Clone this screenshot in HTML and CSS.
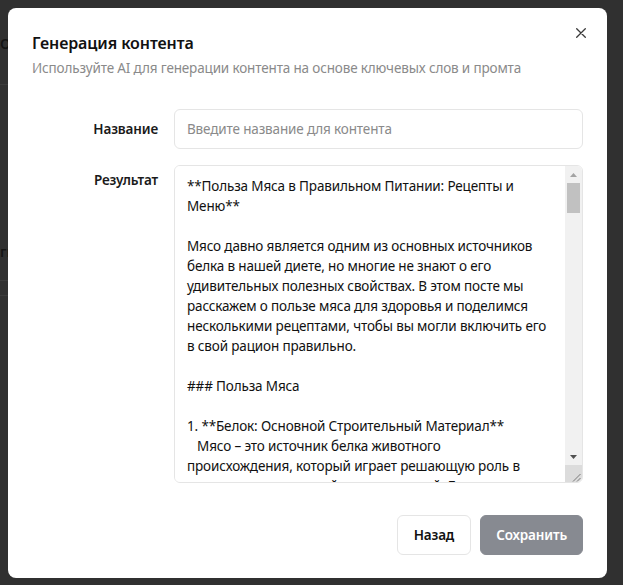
FILE: index.html
```html
<!DOCTYPE html>
<html lang="ru">
<head>
<meta charset="utf-8">
<title>Генерация контента</title>
<link rel="stylesheet" href="styles.css">
</head>
<body>
<div class="page">
  <div class="page-line l1"></div>
  <div class="page-line l2"></div>
  <div class="page-line l3"></div>
  <div class="page-text t1">Ог</div>
  <div class="page-text t2">ги</div>
</div>
<div class="overlay">
  <div class="modal" role="dialog">
    <button class="close" type="button" aria-label="Закрыть">
      <svg width="10" height="10" viewBox="0 0 10 10"><path d="M0.7 0.7L9.3 9.3M9.3 0.7L0.7 9.3" stroke="#3a3a3a" stroke-width="1.3" stroke-linecap="round"/></svg>
    </button>
    <div class="header">
      <h2 class="title">Генерация контента</h2>
      <p class="subtitle">Используйте AI для генерации контента на основе ключевых слов и промта</p>
    </div>
    <form class="form">
      <label class="label label-mid" for="name">Название</label>
      <input id="name" class="input" type="text" placeholder="Введите название для контента">
      <label class="label label-top" for="result">Результат</label>
      <div class="textarea-wrap">
        <textarea id="result" class="textarea">**Польза Мяса в Правильном Питании: Рецепты и Меню**

Мясо давно является одним из основных источников белка в нашей диете, но многие не знают о его удивительных полезных свойствах. В этом посте мы расскажем о пользе мяса для здоровья и поделимся несколькими рецептами, чтобы вы могли включить его в свой рацион правильно.

### Польза Мяса

1. **Белок: Основной Строительный Материал**
   Мясо – это источник белка животного
происхождения, который играет решающую роль в построении мышечной массы и тканей. Белок также необходим для восстановления организма после физических нагрузок.

2. **Железо и Профилактика Анемии**
   Красное мясо богато гемовым железом, которое усваивается организмом значительно лучше, чем железо из растительных продуктов.

3. **Витамины Группы B**
   Мясо содержит витамины B6 и B12, которые поддерживают работу нервной системы и участвуют в образовании красных кровяных телец.

4. **Цинк и Иммунитет**
   Цинк, содержащийся в говядине и баранине, укрепляет иммунную систему и способствует заживлению ран.

5. **Чувство Сытости**
   Блюда из мяса надолго утоляют голод, что помогает контролировать аппетит и избегать лишних перекусов.

### Рецепты

**1. Запеченная Куриная Грудка с Травами**

Ингредиенты:
- 2 куриные грудки
- 1 ст. л. оливкового масла
- 2 зубчика чеснока
- розмарин, тимьян, соль, перец

Приготовление:
1. Разогрейте духовку до 180 °C.
2. Натрите грудки маслом, чесноком и травами.
3. Запекайте 25–30 минут до готовности.

### Пример Меню на Неделю

**Понедельник**
- Завтрак: омлет с ветчиной и зеленью
- Обед: куриный суп с овощами
- Ужин: запеченная куриная грудка с салатом

### Заключение

Мясо – ценный продукт, который при правильном выборе и приготовлении приносит организму огромную пользу.</textarea>
        <div class="scrollbar" aria-hidden="true">
          <div class="sb-btn">
            <svg width="7" height="4" viewBox="0 0 7 4"><polygon points="0,4 3.5,0 7,4" fill="#a3a3a3"/></svg>
          </div>
          <div class="sb-track"><div class="sb-thumb"></div></div>
          <div class="sb-btn">
            <svg width="7" height="4" viewBox="0 0 7 4"><polygon points="0,0 7,0 3.5,4" fill="#505050"/></svg>
          </div>
          <div class="sb-corner">
            <svg width="17" height="17" viewBox="0 0 17 17"><path d="M8 16.5L15.5 9M12 16.5L15.5 13" stroke="#7a7a7a" stroke-width="1"/></svg>
          </div>
        </div>
      </div>
    </form>
    <div class="footer">
      <button class="btn btn-back" type="button">Назад</button>
      <button class="btn btn-save" type="button">Сохранить</button>
    </div>
  </div>
</div>
</body>
</html>
```
FILE: styles.css
```css
* { box-sizing: border-box; }
html, body { height: 100%; }
body {
  margin: 0;
  background: #303030;
  font-family: "Noto Sans", "Open Sans", sans-serif;
  overflow: hidden;
}
.page { position: relative; height: 100%; }
.page-line { position: absolute; left: 0; width: 8px; height: 1px; background: #3b3b3b; }
.l1 { top: 84px; }
.l2 { top: 280px; }
.l3 { top: 295px; }
.page-text {
  position: absolute;
  left: 0;
  font-size: 14px;
  font-weight: 600;
  color: #141414;
  white-space: nowrap;
}
.t1 { top: 34px; }
.t2 { top: 242px; }
.overlay {
  position: fixed;
  inset: 0;
  padding: 8px;
}
.modal {
  position: relative;
  width: 599px;
  height: 570px;
  background: #fff;
  border-radius: 8px;
  padding: 22px 24px 23px 24px;
  display: flex;
  flex-direction: column;
}
.close {
  position: absolute;
  top: 20px;
  right: 21px;
  width: 10px;
  height: 10px;
  padding: 0;
  border: 0;
  background: none;
  display: flex;
}
.header { margin-bottom: 31px; }
.title {
  margin: 0;
  font-size: 16px;
  font-weight: 600;
  letter-spacing: -0.1px;
  line-height: 26px;
  color: #111;
}
.subtitle {
  margin: 2px 0 0;
  font-size: 13.5px;
  letter-spacing: -0.15px;
  line-height: 20px;
  color: #8a8a8a;
}
.form {
  display: grid;
  grid-template-columns: 126px 1fr;
  column-gap: 16px;
  row-gap: 16px;
}
.label {
  font-size: 13.5px;
  letter-spacing: -0.15px;
  font-weight: 600;
  color: #1a1a1a;
  text-align: right;
}
.label-mid { align-self: center; }
.label-top { padding-top: 6px; }
.input {
  height: 40px;
  border: 1px solid #e5e5e5;
  border-radius: 6px;
  padding: 0 12px;
  font: 13.5px "Noto Sans", "Open Sans", sans-serif;
  letter-spacing: -0.15px;
  color: #111;
  outline: none;
}
.input::placeholder { color: #8a8a8a; }
.textarea-wrap {
  position: relative;
  height: 318px;
  border: 1px solid #e5e5e5;
  border-radius: 6px;
  overflow: hidden;
  display: flex;
}
.textarea {
  flex: 1;
  border: 0;
  padding: 10px 29px 8px 12px;
  font: 13.5px/20px "Noto Sans", "Open Sans", sans-serif;
  letter-spacing: -0.15px;
  color: #111;
  resize: none;
  outline: none;
  background: #fff;
}
.scrollbar {
  position: absolute;
  top: 0;
  right: 0;
  bottom: 0;
  width: 17px;
  display: flex;
  flex-direction: column;
  background: #f1f1f1;
}
.sb-btn {
  height: 17px;
  flex: none;
  display: flex;
  align-items: center;
  justify-content: center;
}
.sb-track { flex: 1; }
.sb-thumb {
  height: 30px;
  margin: 0 2px;
  background: #c1c1c1;
}
.sb-corner {
  height: 17px;
  flex: none;
  background: #dcdcdc;
  display: flex;
}
.footer {
  margin-top: auto;
  display: flex;
  justify-content: flex-end;
  gap: 9px;
}
.btn {
  height: 40px;
  border-radius: 6px;
  padding: 0 16px;
  font: 600 13.5px "Noto Sans", "Open Sans", sans-serif;
  letter-spacing: -0.15px;
}
.btn-back { background: #fff; border: 1px solid #e5e5e5; color: #111; }
.btn-save { background: #878a91; border: 1px solid #878a91; color: #fff; padding: 0 15px; }
```
